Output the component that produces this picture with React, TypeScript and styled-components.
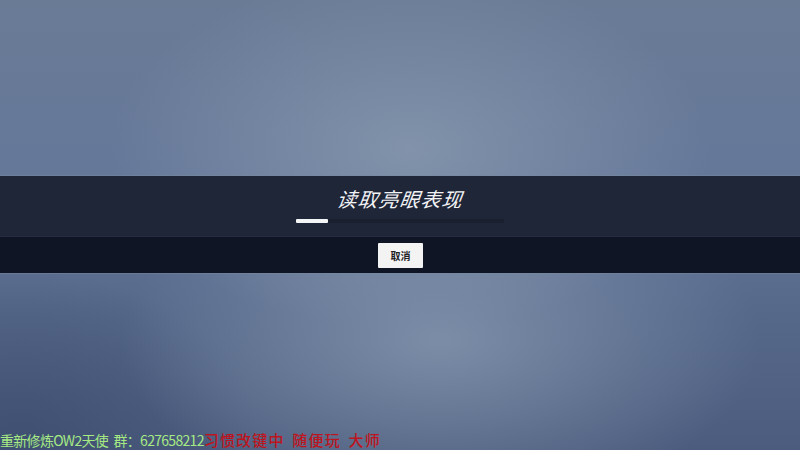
import styled, { createGlobalStyle } from 'styled-components';

const GlobalStyle = createGlobalStyle`
  html, body {
    margin: 0;
    padding: 0;
    width: 100%;
    height: 100%;
    overflow: hidden;
  }
  #root {
    height: 100%;
  }
`;

export default function App() {
  const progress = 0.155;

  return (
    <>
      <GlobalStyle />
      <Screen>
        <Dialog>
          <Header>
            <Title>读取亮眼表现</Title>
            <Track>
              <Fill style={{ width: `${progress * 100}%` }} />
            </Track>
          </Header>
          <Actions>
            <CancelButton>取消</CancelButton>
          </Actions>
        </Dialog>
        <Overlay>
          <Caption $tone="green">重新修炼OW2天使 群：627658212</Caption>
          <Caption $tone="red">习惯改键中 随便玩 大师</Caption>
        </Overlay>
      </Screen>
    </>
  );
}

const Screen = styled.main`
  position: relative;
  width: 800px;
  height: 450px;
  display: flex;
  flex-direction: column;
  padding-top: 175px;
  box-sizing: border-box;
  background:
    radial-gradient(ellipse 300px 180px at 410px 150px, rgba(132, 149, 172, 0.9), rgba(132, 149, 172, 0) 100%),
    radial-gradient(ellipse 320px 170px at 440px 340px, rgba(130, 148, 172, 0.85), rgba(130, 148, 172, 0) 100%),
    radial-gradient(ellipse 240px 170px at 20px 440px, rgba(58, 74, 108, 0.7), rgba(58, 74, 108, 0) 100%),
    linear-gradient(180deg, #6a7b96 0%, #65779a 45%, #56688a 70%, #4c5c7e 100%);
  font-family: 'Noto Sans CJK SC', 'Noto Sans', sans-serif;
  overflow: hidden;
`;

const Dialog = styled.section`
  display: flex;
  flex-direction: column;
  width: 100%;
  border-top: 1px solid rgba(120, 135, 160, 0.5);
  border-bottom: 1px solid rgba(120, 135, 160, 0.5);
`;

const Header = styled.div`
  height: 61px;
  background: #1f2638;
  display: flex;
  flex-direction: column;
  align-items: center;
  box-sizing: border-box;
  padding-top: 9px;
  border-bottom: 1px solid #262d40;
`;

const Title = styled.h1`
  margin: 0;
  color: #f2f3f5;
  font-size: 20px;
  line-height: 27px;
  font-weight: 400;
  font-style: italic;
  letter-spacing: 1px;
  transform: skewX(-8deg);
`;

const Track = styled.div`
  margin-top: 7px;
  width: 208px;
  height: 4px;
  background: #1a2030;
`;

const Fill = styled.div`
  height: 100%;
  background: #f4f5f7;
  border-radius: 1px;
`;

const Actions = styled.div`
  height: 36px;
  background: #0f1524;
  display: flex;
  justify-content: center;
  align-items: center;
`;

const CancelButton = styled.button`
  width: 45px;
  height: 25px;
  margin-left: 1px;
  border: none;
  border-radius: 1px;
  background: #f3f3f3;
  color: #222226;
  font-family: 'Noto Sans CJK SC', sans-serif;
  font-size: 10px;
  font-weight: 700;
  padding: 0;
`;

const Overlay = styled.div`
  position: absolute;
  left: 0;
  bottom: 1px;
  display: flex;
  align-items: baseline;
`;

const Caption = styled.span<{ $tone: 'green' | 'red' }>`
  font-size: ${p => (p.$tone === 'green' ? '14px' : '15px')};
  line-height: 18px;
  white-space: pre;
  color: ${p => (p.$tone === 'green' ? '#a6ea84' : '#bd1520')};
  font-family: ${p =>
    p.$tone === 'green'
      ? "'Noto Sans CJK SC', sans-serif"
      : "'Noto Sans CJK SC', serif"};
  font-weight: ${p => (p.$tone === 'green' ? 400 : 500)};
  letter-spacing: ${p => (p.$tone === 'green' ? '-0.7px' : '1.2px')};
  word-spacing: ${p => (p.$tone === 'green' ? '3px' : '3px')};
`;
